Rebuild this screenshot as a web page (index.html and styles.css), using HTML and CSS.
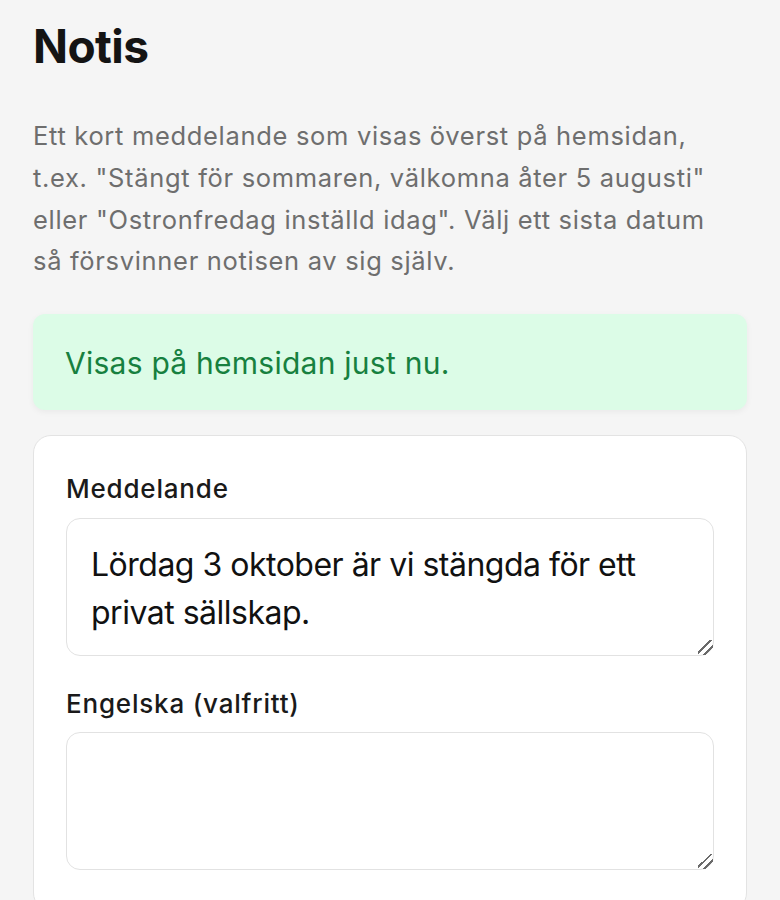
FILE: index.html
```html
<!DOCTYPE html>
<html lang="sv">
<head>
<meta charset="utf-8">
<title>Notis</title>
<link rel="stylesheet" href="styles.css">
</head>
<body>
<main class="page">
  <h1 class="title">Notis</h1>
  <p class="intro">Ett kort meddelande som visas överst på hemsidan,<br>t.ex. "Stängt för sommaren, välkomna åter 5 augusti"<br>eller "Ostronfredag inställd idag". Välj ett sista datum<br>så försvinner notisen av sig själv.</p>
  <div class="notice">Visas på hemsidan just nu.</div>
  <form class="card">
    <div class="field">
      <label class="label" for="msg">Meddelande</label>
      <textarea class="input" id="msg" rows="2">Lördag 3 oktober är vi stängda för ett privat sällskap.</textarea>
    </div>
    <div class="field">
      <label class="label" for="msg-en">Engelska (valfritt)</label>
      <textarea class="input" id="msg-en" rows="2"></textarea>
    </div>
  </form>
</main>
</body>
</html>
```

FILE: styles.css
```css
* { box-sizing: border-box; }
html, body {
  margin: 0;
  background: #f5f5f5;
}
body {
  font-family: Inter, "Noto Sans", "Liberation Sans", sans-serif;
  color: #1a1a1a;
}
.page {
  padding: 19px 33px 0;
  display: flex;
  flex-direction: column;
}
.title {
  margin: 0;
  font-size: 46px;
  line-height: 1.2;
  font-weight: 700;
  letter-spacing: -0.6px;
  color: #141414;
}
.intro {
  margin: 41px 0 0;
  font-size: 25.5px;
  line-height: 41.7px;
  letter-spacing: 0.68px;
  color: #6e6e6e;
  white-space: nowrap;
}
.notice {
  margin-top: 32px;
  background: #dcfce7;
  color: #17803f;
  border-radius: 12px;
  padding: 2px 32px 0;
  height: 96px;
  display: flex;
  align-items: center;
  font-size: 30px;
  letter-spacing: 0.25px;
  box-shadow: 0 2px 6px rgba(0, 0, 0, 0.05);
}
.card {
  margin-top: 25px;
  background: #fff;
  border: 1px solid #e3e3e3;
  border-radius: 18px;
  padding: 32px 32px 40px;
  display: flex;
  flex-direction: column;
  gap: 27px;
}
.field {
  display: flex;
  flex-direction: column;
}
.label {
  display: block;
  font-size: 26px;
  line-height: 41.6px;
  font-weight: 500;
  letter-spacing: 0.8px;
  margin-bottom: 8px;
  color: #1a1a1a;
}
.input {
  display: block;
  width: 100%;
  height: 138px;
  border: 1px solid #e2e2e2;
  border-radius: 14px;
  padding: 22px 24px 18px;
  font-family: inherit;
  font-size: 32px;
  line-height: 48px;
  letter-spacing: -0.5px;
  color: #111;
  background: #fff;
  resize: vertical;
}
.input::-webkit-resizer {
  background: linear-gradient(135deg,
    transparent 0 40%,
    #6a6a6a 40% 48%,
    transparent 48% 66%,
    #6a6a6a 66% 74%,
    transparent 74%);
}
```
